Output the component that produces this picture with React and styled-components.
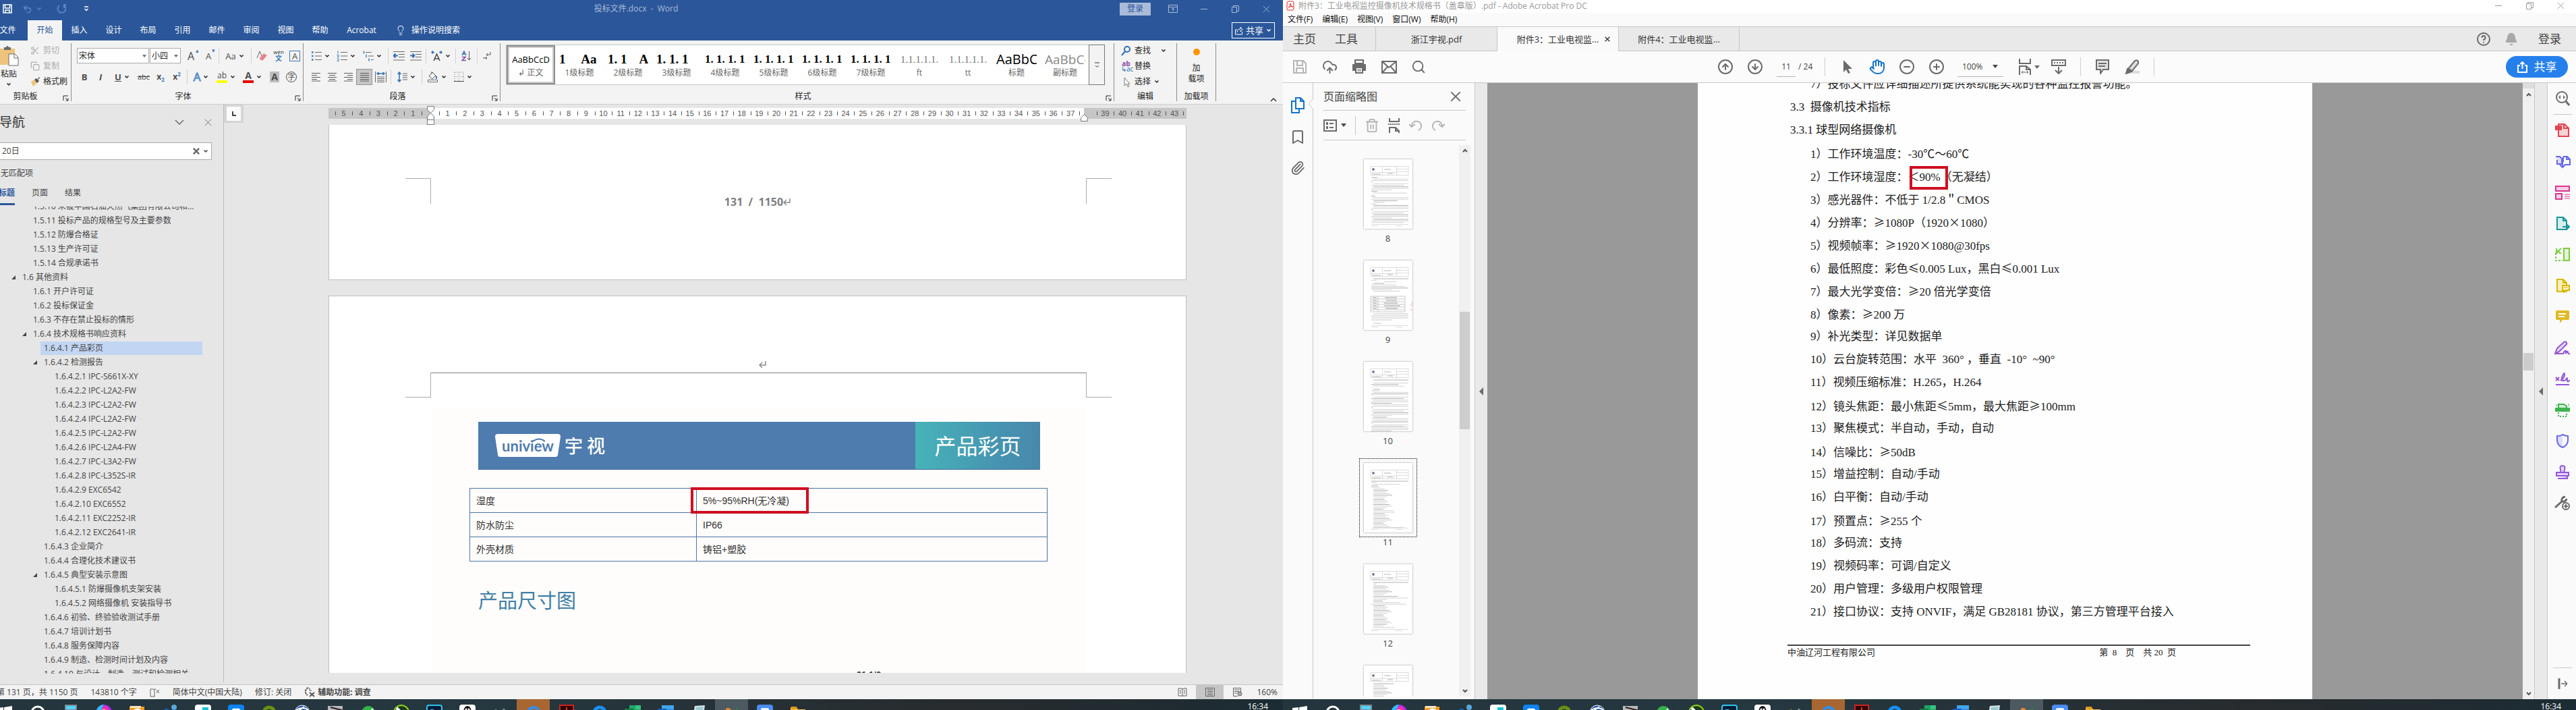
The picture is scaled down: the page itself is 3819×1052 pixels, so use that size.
import React from 'react';
import styled, { createGlobalStyle } from 'styled-components';
import {
  Bell,
  Bookmark,
  CircleArrowDown,
  CircleArrowUp,
  CircleMinus,
  CirclePlus,
  CloudUpload,
  Copy,
  Hand,
  Lightbulb,
  Paperclip,
  Scissors,
  Search,
  Trash2,
  Undo2,
} from 'lucide-react';

const ui = '"Open Sans", "Noto Sans CJK SC", sans-serif';
const cjk = '"Noto Sans CJK SC", sans-serif';

const menuTabs = ['插入', '设计', '布局', '引用', '邮件', '审阅', '视图', '帮助'];

const styleItems = [
  { label: '↲ 正文', text: 'AaBbCcD', kind: 'body', active: true },
  { label: '1级标题', text: '1     Aa', kind: 'serif' },
  { label: '2级标题', text: '1. 1    A', kind: 'serif' },
  { label: '3级标题', text: '1. 1. 1', kind: 'serif' },
  { label: '4级标题', text: '1. 1. 1. 1', kind: 'small' },
  { label: '5级标题', text: '1. 1. 1. 1', kind: 'small' },
  { label: '6级标题', text: '1. 1. 1. 1', kind: 'small' },
  { label: '7级标题', text: '1. 1. 1. 1', kind: 'small' },
  { label: 'ft', text: '1.1.1.1.1.', kind: 'thin' },
  { label: 'tt', text: '1.1.1.1.1.', kind: 'thin' },
  { label: '标题', text: 'AaBbC', kind: 'title' },
  { label: '副标题', text: 'AaBbCc', kind: 'subtitle' },
];

const outline = [
  [1, '1.5.10 未被中国石油天然气集团有限公司和...'],
  [1, '1.5.11 投标产品的规格型号及主要参数'],
  [1, '1.5.12 防爆合格证'],
  [1, '1.5.13 生产许可证'],
  [1, '1.5.14 合规承诺书'],
  [0, '1.6 其他资料', 'open'],
  [1, '1.6.1 开户许可证'],
  [1, '1.6.2 投标保证金'],
  [1, '1.6.3 不存在禁止投标的情形'],
  [1, '1.6.4 技术规格书响应资料', 'open'],
  [2, '1.6.4.1 产品彩页', 'active'],
  [2, '1.6.4.2 检测报告', 'open'],
  [3, '1.6.4.2.1 IPC-S661X-XY'],
  [3, '1.6.4.2.2 IPC-L2A2-FW'],
  [3, '1.6.4.2.3 IPC-L2A2-FW'],
  [3, '1.6.4.2.4 IPC-L2A2-FW'],
  [3, '1.6.4.2.5 IPC-L2A2-FW'],
  [3, '1.6.4.2.6 IPC-L2A4-FW'],
  [3, '1.6.4.2.7 IPC-L3A2-FW'],
  [3, '1.6.4.2.8 IPC-L352S-IR'],
  [3, '1.6.4.2.9 EXC6542'],
  [3, '1.6.4.2.10 EXC6552'],
  [3, '1.6.4.2.11 EXC2252-IR'],
  [3, '1.6.4.2.12 EXC2641-IR'],
  [2, '1.6.4.3 企业简介'],
  [2, '1.6.4.4 合理化技术建议书'],
  [2, '1.6.4.5 典型安装示意图', 'open'],
  [3, '1.6.4.5.1 防爆摄像机支架安装'],
  [3, '1.6.4.5.2 网络摄像机 安装指导书'],
  [2, '1.6.4.6 初验、终验验收测试手册'],
  [2, '1.6.4.7 培训计划书'],
  [2, '1.6.4.8 服务保障内容'],
  [2, '1.6.4.9 制造、检测时间计划及内容'],
  [2, '1.6.4.10 与设计、制造、测试和检测相关'],
];

const specItems = [
  '工作环境温度：-30℃～60℃',
  null,
  '感光器件：不低于 1/2.8＂CMOS',
  '分辨率：≥1080P（1920×1080）',
  '视频帧率：≥1920×1080@30fps',
  '最低照度：彩色≤0.005 Lux，黑白≤0.001 Lux',
  '最大光学变倍：≥20 倍光学变倍',
  '像素：≥200 万',
  '补光类型：详见数据单',
  '云台旋转范围：水平  360° ，垂直  -10°  ~90°',
  '视频压缩标准：H.265，H.264',
  '镜头焦距：最小焦距≤5mm，最大焦距≥100mm',
  '聚焦模式：半自动，手动，自动',
  '信噪比：≥50dB',
  '增益控制：自动/手动',
  '白平衡：自动/手动',
  '预置点：≥255 个',
  '多码流：支持',
  '视频码率：可调/自定义',
  '用户管理：多级用户权限管理',
  '接口协议：支持 ONVIF，满足 GB28181 协议，第三方管理平台接入',
];

/* indent and width of every text line in a thumbnail */
const full = [[14, 52], [11, 55], [11, 2], [14, 52], [11, 48], [14, 52], [11, 55], [11, 30]];
const list = [[14, 17], [14, 22], [14, 19], [14, 24], [14, 28], [14, 20], [14, 15]];
const thumbs = [
  { page: 8, lines: [[11, 9], ...full, [11, 9], [14, 50], [11, 2], [11, 6], [14, 52], [11, 55], [14, 36], [14, 17], [11, 8], [14, 52], ...full, [14, 52], [11, 55], [11, 48]] },
  { page: 9, table: true, lines: [[14, 52], [11, 8], [30, 18], [14, 16], [11, 38], [11, 50], [11, 55], [11, 30], [14, 40]] },
  { page: 10, lines: [[14, 52], [11, 2], [14, 52], [11, 40], [14, 46], [11, 2], [14, 10], [11, 12], ...full, ...full, [14, 20], [11, 55], ...full] },
  { page: 11, selected: true, lines: [[11, 55], [11, 8], [14, 39], [11, 10], [11, 13], ...list, ...list, [14, 30], [14, 32], ...list, [14, 19], [14, 24], [14, 46]] },
  { page: 12, lines: [[14, 52], [14, 5], ...list, [14, 36], [14, 52], [14, 20], [14, 14], [14, 40], [11, 52], ...list, ...list, [14, 32]] },
  { page: 13, lines: [[14, 30], [14, 16], ...list, ...list, ...list] },
];

/* ---------- icons ---------- */

const Svg = ({ w = 16, h = 16, box, children, ...rest }) => (
  <svg width={w} height={h} viewBox={box || `0 0 ${w} ${h}`} fill="none" stroke="currentColor" aria-hidden="true" {...rest}>
    {children}
  </svg>
);

const Chevron = () => (
  <Svg w={8} h={6} strokeWidth="1.5"><path d="M1.5 1.5 4 4l2.5-2.5" /></Svg>
);

const Caret = () => (
  <Svg w={8} h={5} stroke="none" fill="currentColor"><path d="M0 0h8L4 5z" /></Svg>
);

const Cross = ({ size = 12, width = 1 }) => (
  <Svg w={size} h={size} box="0 0 12 12" strokeWidth={width}><path d="M1 1l10 10M11 1 1 11" /></Svg>
);

const Launcher = () => (
  <Svg w={9} h={9}><path d="M1 8V1h7M4 4l4 4M8 4.5V8H4.5" /></Svg>
);

const ReturnIcon = () => (
  <Svg w={11} h={13} stroke="#8c8c8c" strokeWidth="1.5"><path d="M10 1v6H2M5 3 1 7l4 4" /></Svg>
);

const WindowIcons = ({ ribbon }) => (
  <>
    {ribbon && (
      <WindowButton aria-label="功能区显示选项">
        <Svg w={14} h={12}><path d="M.5.5h13v11H.5zM.5 3.5h13M7 10V5M5 7l2-2 2 2" /></Svg>
      </WindowButton>
    )}
    <WindowButton aria-label="最小化"><Svg w={11} h={11}><path d="M0 5.5h10" /></Svg></WindowButton>
    <WindowButton aria-label="还原"><Svg w={11} h={11}><path d="M.5 2.5h7v8h-7zM2.5 2.5v-2h8v8h-3" /></Svg></WindowButton>
    <WindowButton aria-label="关闭"><Cross size={11} /></WindowButton>
  </>
);

const BulletIcon = ({ mark }) => (
  <Svg w={16} h={16}>
    <path d="M6 2.5h10M6 8h10M6 13.5h10" stroke="#6a6a6a" />
    {mark === 'dot' && <path d="M1 2.5h2.5M1 8h2.5M1 13.5h2.5" stroke="#3d79b8" strokeWidth="2.5" />}
    {mark === 'num' && <path d="M2 .5v4M.5 6.5H3V8L1 9.5h2.5M.5 12H3v3.5H.5" stroke="#3d79b8" />}
  </Svg>
);

const MultiIcon = () => (
  <Svg w={16} h={16}>
    <path d="M4 2.5h9M8 8h8M12 13.5h4" stroke="#6a6a6a" />
    <path d="M1.5.5v4M5 6v4M9 11.5v4" stroke="#3d79b8" strokeWidth="1.5" />
  </Svg>
);

const AlignIcon = ({ type }) => {
  const spans = {
    left: ['1 14', '1 9'],
    center: ['1 14', '3 12'],
    right: ['1 14', '6 14'],
    justify: ['1 14', '1 14'],
  }[type];
  return (
    <Svg w={15} h={14}>
      {[1.5, 4.5, 7.5, 10.5, 13].map((y, i) => {
        const [a, b] = spans[i % 2].split(' ');
        return <path key={y} d={`M${a} ${y}H${b}`} stroke="#5c5c5c" />;
      })}
    </Svg>
  );
};

const IndentIcon = ({ flip }) => (
  <Svg w={17} h={14}>
    <path d="M0 .5h17M8 4.5h9M8 8.5h9M0 13h17" stroke="#6a6a6a" />
    <path d={flip ? 'M0 6.5h6M3.5 3.500l3 3-3 3' : 'M7 6.5H1M3.5 3.5l-3 3 3 3'} stroke="#2f6fb5" strokeWidth="2" />
  </Svg>
);

const PageCurlIcon = ({ color, fill, children }) => (
  <Svg w={22} h={22} stroke={color} strokeWidth="2">
    <path d="M3 2h9l5 5v13H3z" fill={fill} />
    <path d="M12 2v5h5" />
    {children}
  </Svg>
);

const railTools = [
  ['创建 PDF', <Svg w={22} h={22} stroke="#e4434f" strokeWidth="2"><path d="M5 2h9l6 6v12H5z" fill="#f7d3d6" /><path d="M13 2v6h7" /><rect x="1" y="5" width="8" height="5" fill="#e4434f" /></Svg>],
  ['合并文件', <Svg w={24} h={22} stroke="#6868e8" strokeWidth="2"><path d="M2 4h6l3 3v8H4V9" fill="#dcdcfa" /><path d="M13 4h6l4 4v8h-8M13 4v8M18 4v4h4" /><path d="M12 12v7M8 16l4 4 4-4" /></Svg>],
  ['组织页面', <Svg w={22} h={22} stroke="#d83790" strokeWidth="2"><path d="M1 2h20v7H1z" fill="#f5cfe2" /><path d="M1 13h9v8H1z" fill="#f5cfe2" /><path d="M14 14h8M14 17h8M14 20h8" strokeWidth="1" /></Svg>],
  ['导出 PDF', <PageCurlIcon color="#1b959a" fill="#d5eded"><path d="M11 16h9M17 12l4 4-4 4" /></PageCurlIcon>],
  ['编辑 PDF', <Svg w={22} h={22} stroke="#7fcb3f" strokeWidth="2"><path d="M13 2h8v18h-8z" fill="#e3f4d5" /><path d="M1 9v11h10M1 9h9" strokeDasharray="3 2" /><path d="M9 2 3 7M2 2v5h5" /></Svg>],
  ['注释页面', <PageCurlIcon color="#d9b800" fill="#f6eec0"><path d="M11 11h10v7h-5l-3 3v-3h-2z" fill="#fff6c8" /><path d="M13 14h6" strokeWidth="1" /></PageCurlIcon>],
  ['注释', <Svg w={22} h={22} stroke="none"><path d="M3 2h16q2 0 2 2v10q0 2-2 2h-8l-4 5v-5H3q-2 0-2-2V4q0-2 2-2z" fill="#dfba24" /><path d="M5 7h11M5 11h9" stroke="#fff" strokeWidth="2" /></Svg>],
  ['填写和签名', <Svg w={24} h={22} stroke="#9256d9" strokeWidth="2"><path d="M1 20 4 12 14 3q3-2 4 1 1 2-1 3L7 17z" fill="#e5d6f6" /><path d="M1 20h12q3-6 4-4t-1 4q4-5 4-2t3 2" /></Svg>],
  ['发送以供签名', <Svg w={22} h={22} stroke="#9256d9" strokeWidth="2"><path d="M1 9l5 5M6 9l-5 5M8 14q6-4 6-9t-3 2 1 7 5-3 1 2 4 0M1 20h20" /></Svg>],
  ['扫描', <Svg w={22} h={22} stroke="#3fb44f" strokeWidth="2"><path d="M5 9V3h8l4 3v3" fill="#d6f0da" /><path d="M1 9h20v4H1z" fill="#3fb44f" /><path d="M5 15v6h12v-6" strokeDasharray="2 2" /><path d="M2 3v3M20 2v4" strokeWidth="1" /></Svg>],
  ['保护', <Svg w={22} h={22} stroke="#6868e8" strokeWidth="2"><path d="M11 2v18Q3 17 3 10V4q5 0 8-2z" fill="#dcdcfa" stroke="none" /><path d="M11 2q4 2 8 2v6q0 8-8 11-8-3-8-11V4q5 0 8-2z" /></Svg>],
  ['图章', <Svg w={22} h={22} stroke="#9256d9" strokeWidth="2"><path d="M8 12q1-2 0-4-2-6 3-6t3 6q-1 2 0 4" fill="#e5d6f6" /><path d="M2 12h18v5H2zM4 21h14v-4" fill="#e5d6f6" /></Svg>],
  ['更多工具', <Svg w={24} h={22} stroke="#6b6b6b" strokeWidth="3"><path d="M1 18 11 9M11 9q-1-6 5-7M11 9q6 1 7-4" /><circle cx="17" cy="16" r="5" strokeWidth="2" /><path d="M17 13v6M14 16h6" strokeWidth="2" /></Svg>],
];

const taskIcons = [
  ['开始', <><path d="M1 5l9-1v8H1zM11 4l12-2v10H11z" fill="#fff" /></>],
  ['搜索', <circle cx="12" cy="12" r="9" fill="none" stroke="#fff" strokeWidth="3" />],
  ['计算器', <><path d="M3 0h18v24H3z" fill="#7b8a93" /><path d="M5 2h14v5H5z" fill="#52d3ff" /><path d="M5 10h3v2H5zM10 10h3v2h-3z" fill="#fff" /></>],
  ['画图', <><path d="M0 12a12 12 0 0 1 24 0z" fill="#a32cf0" /><path d="M4 12q2-10 12-10l6 10z" fill="#ff2aa5" /><path d="M1 9Q4 0 12 0L6 12z" fill="#25c3f5" /><circle cx="12" cy="12" r="5" fill="#fff" /></>],
  ['照片查看器', <><path d="M1 3h22v20H1z" fill="#f79a1b" /><path d="M2 2h16v3H2z" fill="#f3e6c8" /><circle cx="13" cy="13" r="6" fill="#f79a1b" stroke="#fff" strokeWidth="3" /></>],
  ['协作', <><circle cx="18" cy="4" r="4" fill="#5aa7dd" /><circle cx="7" cy="11" r="5" fill="#0b66c3" /></>],
  ['看图', <><rect width="24" height="24" rx="4" fill="#fff" /><path d="M11 4h9v14h-9z" fill="#18c3d5" /><path d="M4 9h10v10H4z" fill="#0c8fe0" /></>],
  ['网盘', <><rect width="24" height="24" rx="4" fill="#0b84f0" /><path d="M5 12q0-8 7-6 7-2 7 6z" fill="#fff" /></>],
  ['浏览器', <circle cx="12" cy="12" r="8" fill="none" stroke="#6b8f13" strokeWidth="5" />],
  ['网络', <><circle cx="12" cy="12" r="11" fill="#1f50a8" stroke="#fff" /><path d="M3 8q10-6 18 0M2 13q9-7 13-10" stroke="#fff" strokeWidth="2" fill="none" /></>],
  ['标注', <><path d="M1 2h22v20H1z" fill="#b9b9b9" /><path d="M5 4l16 4-14 4" stroke="#222" strokeWidth="2" fill="none" /></>],
  ['安全', <><circle cx="12" cy="12" r="10" fill="#36b24a" /><path d="M7 10l5 4 7-8" stroke="#fff" strokeWidth="2" fill="none" /></>],
  ['CorelDRAW', <><circle cx="12" cy="12" r="11" fill="#1b3a17" stroke="#8fd11c" strokeWidth="2" /><path d="M5 5l14 14" stroke="#fff" strokeWidth="4" /></>],
  ['Photoshop', <><rect x="1" y="1" width="22" height="22" rx="3" fill="#001e36" stroke="#2fc4f2" strokeWidth="2" /><path d="M7 16V8h3q4 2 0 4M14 10h4" stroke="#2fc4f2" strokeWidth="2" fill="none" /></>],
  ['QQ', <><rect width="24" height="24" rx="4" fill="#fff" /><path d="M6 14q0-12 6-12t6 12z" fill="#111" /><circle cx="10" cy="7" r="1.5" fill="#fff" /><circle cx="14" cy="7" r="1.5" fill="#fff" /></>],
  ['星标', <><path d="M5 6l1 3 3 1-3 1-1 3-1-3-3-1 3-1z" fill="#e3b341" /><path d="M17 5l1 2 2 1-2 1-1 2-1-2-2-1 2-1z" fill="#8a9aa3" /></>],
  ['搜索引擎', <circle cx="12" cy="12" r="8" fill="none" stroke="#2f8ff0" strokeWidth="4" />, '#a86632'],
  ['Acrobat', <><path d="M2 1h20v22H2z" fill="#2b0000" stroke="#d32020" strokeWidth="2" /><path d="M12 4v5l-3 6" stroke="#f33" strokeWidth="2" fill="none" /></>],
  ['会议', <circle cx="12" cy="12" r="8" fill="none" stroke="#1690f5" strokeWidth="5" />],
  ['Excel', <><path d="M7 1h17v22H7z" fill="#21a366" /><path d="M16 1h8v6h-8z" fill="#33c481" /><path d="M0 6h13v12H0z" fill="#107c41" /></>],
  ['Word', <><path d="M6 1h18v22H6z" fill="#2b7cd3" /><path d="M6 1h18v6H6z" fill="#41a5ee" /><path d="M0 6h13v12H0z" fill="#185abd" /></>],
  ['记事本', <><path d="M6 2l15-1-3 22-15-3z" fill="#d6e6ea" /><path d="M8 4l11-1-1 5-11 1z" fill="#9fc7d2" /></>],
  ['小工具', <><path d="M3 6q7-4 9 6H3z" fill="#e0862a" /><path d="M10 12q8-1 12-11-2 10-8 13z" fill="#1b9a3c" /></>, '#4c5960'],
  ['会议室', <><rect width="24" height="24" rx="4" fill="#4a8cf0" /><rect x="6" y="5" width="12" height="12" rx="2" fill="#e9f2ff" /></>],
  ['资源管理器', <><path d="M1 4h9l2 3h11v16H1z" fill="#f5c23c" /><path d="M2 3h8v4H2z" fill="#e19a1d" /></>],
];

/* ---------- shared ---------- */

const TaskBar = () => (
  <TaskRow>
    {taskIcons.map(([name, art, tint]) => (
      <TaskButton key={name} aria-label={name} $tint={tint}>
        <svg width="24" height="24" viewBox="0 0 24 24" aria-hidden="true">{art}</svg>
      </TaskButton>
    ))}
    <Clock>16:34</Clock>
  </TaskRow>
);

const wideSigns = /([≥≤×～℃＂＜])/;
const SpecText = ({ children }) => children.split(wideSigns).map((part, i) => (
  wideSigns.test(part) ? <Wide key={i}>{part}</Wide> : part
));

/* ---------- word window ---------- */

const Ribbon = () => (
  <RibbonBar>
    <Group $w={123}>
      <GroupBody>
        <PasteButton>
          <Svg w={30} h={30} stroke="none">
            <path d="M2 4h22v24H2z" fill="#eec47c" />
            <path d="M8 6V2h3q2-4 4 0h3v4z" fill="#6b6b6b" />
            <path d="M15 12h9l5 5v12H15z" fill="#fff" stroke="#6b6b6b" />
            <path d="M23 12v6h6" stroke="#6b6b6b" />
          </Svg>
          <span>粘贴</span>
          <Chevron />
        </PasteButton>
        <Stack>
          <RowButton disabled><Scissors size={14} strokeWidth={2} />剪切</RowButton>
          <RowButton disabled><Copy size={14} strokeWidth={2} />复制</RowButton>
          <RowButton>
            <Svg w={14} h={14} stroke="none"><path d="M1 7l5-3 4 5-6 5z" fill="#eec47c" /><path d="M6 4l3-2 4 4-3 3zM11 3l2-3 1 1-2 3z" fill="#555" /></Svg>
            格式刷
          </RowButton>
        </Stack>
      </GroupBody>
      <GroupLabel><span>剪贴板</span><Launcher /></GroupLabel>
    </Group>
    <Divider />
    <Group $w={343}>
      <GroupBody $pad={8}>
        <Stack>
          <ToolRow>
            <Combo $w={107}>
              <select aria-label="字体" defaultValue="宋体"><option>宋体</option></select><Caret />
            </Combo>
            <Combo $w={46}>
              <select aria-label="字号" defaultValue="小四"><option>小四</option></select><Caret />
            </Combo>
            <Tool $w={28} aria-label="增大字号"><Glyph $size={16}>A</Glyph><Mark>▴</Mark></Tool>
            <Tool $w={24} aria-label="减小字号"><Glyph $size={13}>A</Glyph><Mark>▾</Mark></Tool>
            <Bar />
            <Tool $w={42} aria-label="更改大小写"><Glyph>Aa</Glyph><Chevron /></Tool>
            <Bar />
            <Tool $w={26} aria-label="清除格式">
              <Svg w={16} h={16}><path d="M1 11 5 1l3 7" stroke="#666" /><path d="M5 11l6-7 5 3-6 7q-4 2-5-3z" fill="#e8838f" stroke="none" /></Svg>
            </Tool>
            <Tool $w={24} aria-label="拼音指南"><Pinyin><small>wén</small><b>文</b></Pinyin></Tool>
            <Tool $w={24} aria-label="字符边框"><Glyph $framed>A</Glyph></Tool>
          </ToolRow>
          <ToolRow>
            <Tool $w={22} aria-label="加粗"><Glyph $bold>B</Glyph></Tool>
            <Tool $w={26} aria-label="倾斜"><Glyph $bold $italic>I</Glyph></Tool>
            <Tool $w={38} aria-label="下划线"><Glyph $bold $line="underline">U</Glyph><Chevron /></Tool>
            <Tool $w={26} aria-label="删除线"><Glyph $size={11} $line="line-through">abc</Glyph></Tool>
            <Tool $w={24} aria-label="下标"><Glyph $bold $size={12}>x<sub>2</sub></Glyph></Tool>
            <Tool $w={24} aria-label="上标"><Glyph $bold $size={12}>x<sup>2</sup></Glyph></Tool>
            <Bar />
            <Tool $w={36} aria-label="文本效果"><Glyph $size={17} $outline>A</Glyph><Chevron /></Tool>
            <Tool $w={38} aria-label="突出显示"><Glyph $size={12} $under="#ffff00">ab</Glyph><Chevron /></Tool>
            <Tool $w={40} aria-label="字体颜色"><Glyph $size={14} $bold $under="#e60000">A</Glyph><Chevron /></Tool>
            <Tool $w={26} aria-label="字符底纹"><Glyph $bold $size={14} $shade>A</Glyph></Tool>
            <Tool $w={24} aria-label="带圈字符"><Glyph $size={11} $round>字</Glyph></Tool>
          </ToolRow>
        </Stack>
      </GroupBody>
      <GroupLabel><span>字体</span><Launcher /></GroupLabel>
    </Group>
    <Divider />
    <Group $w={291}>
      <GroupBody $pad={6}>
        <Stack>
          <ToolRow>
            <Tool $w={38} aria-label="项目符号"><BulletIcon mark="dot" /><Chevron /></Tool>
            <Tool $w={38} aria-label="编号"><BulletIcon mark="num" /><Chevron /></Tool>
            <Tool $w={40} aria-label="多级列表"><MultiIcon /><Chevron /></Tool>
            <Bar />
            <Tool $w={26} aria-label="减少缩进"><IndentIcon /></Tool>
            <Tool $w={24} aria-label="增加缩进"><IndentIcon flip /></Tool>
            <Bar />
            <Tool $w={38} aria-label="中文版式">
              <Svg w={17} h={16}><path d="M4 15 8.5 5 13 15M6 12h5" stroke="#444" strokeWidth="1.5" /><path d="M5 2.5H1M3 .5l-2 2 2 2M12 2.5h4M14 .5l2 2-2 2" stroke="#2f6fb5" strokeWidth="1.5" /></Svg>
              <Chevron />
            </Tool>
            <Bar />
            <Tool $w={26} aria-label="排序">
              <Svg w={15} h={16}><path d="M1 7 4 1l3 6M2 5h4" stroke="#2f6fb5" strokeWidth="1.5" /><path d="M1 9.5h5l-5 5h6" stroke="#8a4aa8" strokeWidth="1.5" /><path d="M11.5 1v13M9 11l2.5 3 2.5-3" stroke="#555" /></Svg>
            </Tool>
            <Bar />
            <Tool $w={24} aria-label="显示编辑标记">
              <Svg w={14} h={14} stroke="#555"><path d="M12 1v4H6M8 3 6 5l2 2M1 10h6M5 8l2 2-2 2" /></Svg>
            </Tool>
          </ToolRow>
          <ToolRow>
            <Tool $w={24} aria-label="左对齐"><AlignIcon type="left" /></Tool>
            <Tool $w={24} aria-label="居中"><AlignIcon type="center" /></Tool>
            <Tool $w={24} aria-label="右对齐"><AlignIcon type="right" /></Tool>
            <Tool $w={24} $on aria-label="两端对齐"><AlignIcon type="justify" /></Tool>
            <Tool $w={24} aria-label="分散对齐">
              <Svg w={17} h={16}><path d="M.5 0v16M16.5 0v16M3 8h11M3 10.5h11M3 13h11M3 15.5h11" stroke="#666" /><path d="M3 3h11M5.5 1 3 3l2.5 2M11.5 1 14 3l-2.5 2" stroke="#2f6fb5" strokeWidth="1.5" /></Svg>
            </Tool>
            <Bar />
            <Tool $w={40} aria-label="行距">
              <Svg w={15} h={16}><path d="M3 1v14M.5 4 3 1l2.5 3M.5 12 3 15l2.5-3" stroke="#2f6fb5" strokeWidth="1.5" /><path d="M8 3h7M8 6h7M8 9h7M8 12h7" stroke="#666" /></Svg>
              <Chevron />
            </Tool>
            <Bar />
            <Tool $w={38} aria-label="底纹">
              <Svg w={17} h={17}><path d="M3 8l5-6 5 5-5 5zM7 4V1" stroke="#555" /><path d="M13 7q3 3 1 5z" fill="#2f6fb5" stroke="#2f6fb5" /><path d="M1.5 13.5h14v3h-14z" stroke="#666" fill="#fff" /></Svg>
              <Chevron />
            </Tool>
            <Tool $w={40} aria-label="边框">
              <Svg w={15} h={15} stroke="#777"><path d="M1 1h13v13M1 1v13M7.5 1v13M1 7.5h13" strokeDasharray="1 2" /><path d="M0 14.5h15" stroke="#444" /></Svg>
              <Chevron />
            </Tool>
          </ToolRow>
        </Stack>
      </GroupBody>
      <GroupLabel><span>段落</span><Launcher /></GroupLabel>
    </Group>
    <Divider />
    <Group $w={909}>
      <GroupBody $pad={8}>
        <Gallery>
          {styleItems.map((item) => (
            <StyleItem key={item.label} $active={item.active}>
              <Preview $kind={item.kind}>{item.text}</Preview>
              <StyleName>{item.label}</StyleName>
            </StyleItem>
          ))}
          <GalleryMore aria-label="其他样式">
            <Svg w={9} h={9} stroke="#333"><path d="M1 1h7M2 5l2.5 2.5L7 5" /></Svg>
          </GalleryMore>
        </Gallery>
      </GroupBody>
      <GroupLabel><span>样式</span><Launcher /></GroupLabel>
    </Group>
    <Divider />
    <Group $w={92}>
      <GroupBody $pad={10}>
        <Stack>
          <RowButton>
            <Svg w={15} h={15} stroke="#2f6fb5" strokeWidth="2"><circle cx="9" cy="5" r="4" /><path d="M6 8l-5 6" /></Svg>
            查找<ChevronGap /><Chevron />
          </RowButton>
          <RowButton><Swap><b>ab</b><i>↳ac</i></Swap>替换</RowButton>
          <RowButton>
            <Svg w={15} h={15} stroke="#777"><path d="M5 1v12l3-3 2 5 2-1-2-4h3z" fill="#fff" /></Svg>
            选择<Chevron />
          </RowButton>
        </Stack>
      </GroupBody>
      <GroupLabel $plain><span>编辑</span></GroupLabel>
    </Group>
    <Divider />
    <Group $w={57}>
      <GroupBody>
        <AddinButton>
          <Svg w={10} h={12} stroke="none"><ellipse cx="5" cy="6" rx="5" ry="5" fill="#ff9500" /></Svg>
          <span>加</span>
          <span>载项</span>
        </AddinButton>
      </GroupBody>
      <GroupLabel $plain><span>加载项</span></GroupLabel>
    </Group>
    <Divider />
    <Collapse aria-label="折叠功能区"><Svg w={10} h={7} stroke="#333" strokeWidth="1.5"><path d="M1 6l4-4 4 4" /></Svg></Collapse>
  </RibbonBar>
);

const range = (a, b) => Array.from({ length: Math.abs(b - a) + 1 }, (_, i) => (a < b ? a + i : a - i));

const Ruler = () => (
  <RulerBar>
    <RulerPart $grow={151} $dim>
      <RulerGap $grow={38} />
      {range(5, 1).map((n) => <RulerCell key={n}>{n}</RulerCell>)}
      <RulerGap $grow={50} $tick />
    </RulerPart>
    <RulerPart $grow={970}>
      <IndentMarker $top={-3}>
        <Svg w={11} h={28} stroke="#777"><path d="M.5.5h10v5l-5 5-5-5zM5.5 10.5l5 5v5H.5v-5zM.5 20.5h10v7H.5z" fill="#fff" /></Svg>
      </IndentMarker>
      <RulerGap $grow={50} />
      {range(1, 37).map((n) => <RulerCell key={n}>{n}</RulerCell>)}
      <RulerGap $grow={28} $tick />
    </RulerPart>
    <RulerPart $grow={152} $dim>
      <IndentMarker $top={9}>
        <Svg w={11} h={11} stroke="#777"><path d="M5.5.5l5 5v5H.5v-5z" fill="#fff" /></Svg>
      </IndentMarker>
      <RulerGap $grow={72} />
      {range(39, 43).map((n) => <RulerCell key={n}>{n}</RulerCell>)}
      <RulerGap $grow={20} $tick />
    </RulerPart>
  </RulerBar>
);

const WordWindow = () => (
  <Word>
    <WordTitle>
      <QuickButton $w={18} $on aria-label="保存">
        <Svg w={14} h={14} stroke="#fff" strokeWidth="1.5"><path d="M1 1h12v12H1zM3.5 1v5h7V1M4 13V9h6v4" /></Svg>
      </QuickButton>
      <QuickButton $w={38} aria-label="撤消"><Undo2 size={15} strokeWidth={2.5} /><Chevron /></QuickButton>
      <QuickButton $w={34} aria-label="恢复">
        <Svg w={14} h={14} strokeWidth="2"><path d="M11 2a6 6 0 1 1-7 0M11 6V1h3" /></Svg>
      </QuickButton>
      <QuickButton $w={24} $on aria-label="自定义快速访问工具栏"><Svg w={8} h={9} stroke="#fff" strokeWidth="1.5"><path d="M1 1h6M1.5 4 4 6.5 6.5 4" /></Svg></QuickButton>
      <WordName>投标文件.docx  -  Word</WordName>
      <LoginButton>登录</LoginButton>
      <WindowIcons ribbon />
    </WordTitle>
    <WordTabs>
      <FileTab>文件</FileTab>
      <WordTab $active>开始</WordTab>
      {menuTabs.map((tab) => <WordTab key={tab}>{tab}</WordTab>)}
      <AcrobatTab>Acrobat</AcrobatTab>
      <TellMe><Lightbulb size={16} strokeWidth={1.5} />操作说明搜索</TellMe>
      <WordShare>
        <Svg w={12} h={13}><path d="M3 5H.5v7h10V8M3 9q0-5 5-5V1l3 4-3 3V6" /></Svg>
        共享<Chevron />
      </WordShare>
    </WordTabs>
    <Ribbon />
    <Workspace>
      <NavPane>
        <NavHead>
          <h2>导航</h2>
          <IconButton aria-label="任务窗格选项"><Svg w={14} h={8} strokeWidth="1.5"><path d="M1 1l6 6 6-6" /></Svg></IconButton>
          <IconButton aria-label="关闭导航"><Cross size={11} /></IconButton>
        </NavHead>
        <NavSearch>
          <input aria-label="搜索文档" defaultValue="20日" />
          <IconButton aria-label="清除"><Cross size={10} width={3} /></IconButton>
          <Chevron />
        </NavSearch>
        <NavHint>无匹配项</NavHint>
        <NavTabs>
          <NavTab $active>标题</NavTab>
          <NavTab>页面</NavTab>
          <NavTab>结果</NavTab>
        </NavTabs>
        <Tree>
          {outline.map(([level, text, state]) => (
            <TreeRow key={text} $level={level}>
              <TreeArrow>
                {state === 'open' && <Svg w={6} h={6} stroke="none" fill="#444"><path d="M6 0v6H0z" /></Svg>}
              </TreeArrow>
              <TreeLabel $active={state === 'active'}>{text}</TreeLabel>
            </TreeRow>
          ))}
        </Tree>
      </NavPane>
      <TabStop><button type="button" aria-label="制表符"><Svg w={8} h={8} strokeWidth="2"><path d="M2 0v6h5" /></Svg></button></TabStop>
      <Canvas>
        <Ruler />
        <PageEnd>
          <MarkRow $flip>
            <Corner $side="left" $edge="top" />
            <Corner $side="right" $edge="top" />
          </MarkRow>
          <PageNumber>131  /  1150<ReturnIcon /></PageNumber>
        </PageEnd>
        <PageStart>
          <HeaderMark><ReturnIcon /></HeaderMark>
          <MarkRow $rule>
            <Corner $side="left" $edge="bottom" />
            <Corner $side="right" $edge="bottom" />
          </MarkRow>
          <Brochure>
            <Banner>
              <Logo>
                <Svg w={97} h={34} stroke="none">
                  <path d="M4 0h89q4 0 4 4l-4 27q0 3-4 3H8q-4 0-4-3L0 4q0-4 4-4z" fill="#fff" />
                  <path d="M56 11q9-7 18 0" stroke="#4e7cae" strokeWidth="2" />
                </Svg>
                <LogoText>uniview</LogoText>
              </Logo>
              <BrandName>宇 视</BrandName>
              <BannerTag>产品彩页</BannerTag>
            </Banner>
            <SpecTable>
              <tbody>
                <tr><th scope="row">湿度</th><td>5%~95%RH(无冷凝)<RedBox $top={-2} $left={-9} $w={175} $h={39} /></td></tr>
                <tr><th scope="row">防水防尘</th><td>IP66</td></tr>
                <tr><th scope="row">外壳材质</th><td>铸铝+塑胶</td></tr>
              </tbody>
            </SpecTable>
            <SizeTitle>产品尺寸图</SizeTitle>
            <SizeNote>91.1/2</SizeNote>
          </Brochure>
        </PageStart>
      </Canvas>
    </Workspace>
    <StatusBar>
      <span>第 131 页，共 1150 页</span>
      <span>143810 个字</span>
      <Svg w={15} h={14} stroke="#666"><path d="M7 3v10H1V2h4l2 1V2h2M7 13l1-1M10 3l4 5M14 3l-4 5" /></Svg>
      <span>简体中文(中国大陆)</span>
      <span>修订: 关闭</span>
      <Access>
        <Svg w={16} h={15} stroke="#555"><path d="M6 1a6 6 0 0 0-1 11" strokeDasharray="3 1" strokeWidth="2" /><path d="M8 8l7 6M15 8l-7 6" strokeWidth="2" /><path d="M8 1v4h3" /></Svg>
        辅助功能: 调查
      </Access>
      <ViewSwitch>
        <ViewButton aria-label="阅读视图"><Svg w={14} h={13} stroke="#666"><path d="M7 1v12M1 1h4l2 1 2-1h4v11H1zM3 4h2M3 6h2M3 8h2M9 4h2M9 6h2M9 8h2" /></Svg></ViewButton>
        <ViewButton $on aria-label="页面视图"><Svg w={14} h={13} stroke="#666"><path d="M.5.5h13v12H.5zM3 3h8M3 5.5h8M3 8h8M3 10.5h8" /></Svg></ViewButton>
        <ViewButton aria-label="Web 版式视图"><Svg w={14} h={13} stroke="#666"><path d="M7 12.5H.5V.5h11V6M2 3h8M2 5.5h7M2 8h4" /><circle cx="10" cy="9" r="3" fill="#aaa" /></Svg></ViewButton>
        <span>160%</span>
      </ViewSwitch>
    </StatusBar>
    <TaskBar />
  </Word>
);

/* ---------- acrobat window ---------- */

const Thumbnail = ({ page, lines, table, selected }) => (
  <ThumbItem $selected={selected}>
    <ThumbSheet>
      <svg width="72" height="103" viewBox="0 0 72 103" aria-hidden="true">
        <path d="M10 10.5h56v13H10zM27.5 10v13M48.5 10v13M48 14.5h18M48 18.5h18M10 19.5h38" fill="none" stroke="#dcdcdc" />
        <circle cx="14" cy="15" r="2" fill="#7a7f96" />
        <path d="M30 15h10M35 21h8M12 22h13" stroke="#b5b5b5" />
        {lines.map(([x, w], i) => (
          <path key={i} d={`M${x} ${27 + i * 2.3}h${w}`} stroke={i % 3 ? '#d2d2d2' : '#b0b0b0'} />
        ))}
        {table && (
          <>
            <path d="M10 53h51v23H10zM21 53v23M10 57h51M10 61h51M10 65h51M10 69h51M10 73h51" fill="none" stroke="#c9c9c9" />
            <path d="M13 55h6M31 55h18M13 59h6M33 59h16M13 63h6M30 63h20M13 67h6M30 67h24M13 71h6M32 71h18" stroke="#999" />
            <path d="M70 62l2 1M69 66h3M69 72l3 2" stroke="#f3a0a0" />
            <path d="M14 79h52M11 82h55M11 85h55M11 88h30M14 93h12" stroke="#c4c4c4" />
          </>
        )}
        <path d="M11 98.5h10M47 98.5h10M11 96.5h55" stroke="#ddd" />
      </svg>
    </ThumbSheet>
    <ThumbLabel>{page}</ThumbLabel>
  </ThumbItem>
);

const AcrobatWindow = () => (
  <Acrobat>
    <PdfTitle>
      <Svg w={12} h={15} stroke="#e5252a"><rect x="1" y="1" width="10" height="13" rx="2" /><path d="M3 10q3-1 3-6 1 5 4 5-4-1-7 1z" /></Svg>
      <h1>附件3：工业电视监控摄像机技术规格书（盖章版）.pdf - Adobe Acrobat Pro DC</h1>
      <WindowIcons />
    </PdfTitle>
    <PdfMenu>
      {['文件(F)', '编辑(E)', '视图(V)', '窗口(W)', '帮助(H)'].map((m) => <button type="button" key={m}>{m}</button>)}
    </PdfMenu>
    <PdfTabs>
      <PdfHome><button type="button">主页</button><button type="button">工具</button></PdfHome>
      <PdfTab>浙江宇视.pdf</PdfTab>
      <PdfTab $active>附件3：工业电视监...<Cross size={8} width={2} /></PdfTab>
      <PdfTab>附件4：工业电视监...</PdfTab>
      <PdfAccount>
        <Svg w={22} h={22} strokeWidth="2" stroke="#6b6b6b"><circle cx="11" cy="11" r="9" /><path d="M8.5 9q0-3 2.5-3t2.5 2.5T11 12v1M11 15v1.5" /></Svg>
        <Bell size={20} fill="#a8a8a8" color="#a8a8a8" />
        <button type="button">登录</button>
      </PdfAccount>
    </PdfTabs>
    <PdfTools>
      <ToolSet>
        <PdfTool aria-label="保存"><Svg w={20} h={20} stroke="#b5b5b5" strokeWidth="2"><path d="M1 1h14l4 4v14H1zM6 1v7h8V1M5 19v-7h10v7" /></Svg></PdfTool>
        <PdfTool aria-label="上传"><CloudUpload size={23} /></PdfTool>
        <PdfTool aria-label="打印"><Svg w={22} h={22} stroke="none"><path d="M5 1h12v5H5z" stroke="#6b6b6b" strokeWidth="2" /><path d="M1 7h20v10H1z" fill="#6b6b6b" /><path d="M6 12h10v8H6z" fill="#fff" stroke="#6b6b6b" strokeWidth="2" /><path d="M8 15h6M8 17h6" stroke="#6b6b6b" /></Svg></PdfTool>
        <PdfTool aria-label="邮件"><Svg w={23} h={19} strokeWidth="2"><path d="M1 1h21v17H1zM1 1l10 9L22 1M1 18l8-9M22 18l-8-9" /></Svg></PdfTool>
        <PdfTool aria-label="查找"><Search size={22} /></PdfTool>
      </ToolSet>
      <ToolSet $middle>
        <PdfTool aria-label="上一页"><CircleArrowUp size={24} /></PdfTool>
        <PdfTool aria-label="下一页"><CircleArrowDown size={24} /></PdfTool>
        <PageInput aria-label="页码" defaultValue="11" />
        <PageTotal>/ 24</PageTotal>
        <PdfRule />
        <PdfTool aria-label="选择"><Svg w={14} h={20} stroke="none"><path d="M1 0v18l4-4 3 6 3-1-3-6h6z" fill="#6b6b6b" /></Svg></PdfTool>
        <PdfTool $blue aria-label="抓手"><Hand size={24} /></PdfTool>
        <PdfTool aria-label="缩小"><CircleMinus size={24} /></PdfTool>
        <PdfTool aria-label="放大"><CirclePlus size={24} /></PdfTool>
        <ZoomBox><select aria-label="缩放" defaultValue="100%"><option>100%</option></select><Caret /></ZoomBox>
        <PdfTool aria-label="适合宽度">
          <Svg w={18} h={24} strokeWidth="2"><path d="M1 0v7h16V0M1 24V11h10l6 5v8M11 11v5h6" /><path d="M4 20h10M6 18l-2 2 2 2M12 18l2 2-2 2" strokeWidth="1" /></Svg>
          <Caret />
        </PdfTool>
        <PdfTool aria-label="滚动"><Svg w={22} h={22} strokeWidth="2"><path d="M1 1h20v8H1zM11 11v10M6 16l5 5 5-5" /><path d="M4 5h14" strokeDasharray="2 2" /></Svg></PdfTool>
        <PdfRule $tight />
        <PdfTool aria-label="添加附注"><Svg w={20} h={22} strokeWidth="2"><path d="M1 1h18v14h-8l-4 6v-6H1z" fill="#e2e2e2" /><path d="M4 6h12M4 10h10" /></Svg></PdfTool>
        <PdfTool aria-label="突出显示"><Svg w={22} h={22} strokeWidth="2"><path d="M9 17h13v4H5z" fill="#dcdcdc" stroke="none" /><path d="M5 14 15 2q3-2 5 1v3l-9 11z" fill="#dcdcdc" /><path d="M4 14l6 4-8 3z" fill="#6b6b6b" /></Svg></PdfTool>
        <PdfRule $tight />
      </ToolSet>
      <PdfShare>
        <Svg w={15} h={17} stroke="#fff" strokeWidth="2"><path d="M4 6H1v10h13V6h-3M7.5 11V1M4.5 4l3-3 3 3" /></Svg>
        共享
      </PdfShare>
    </PdfTools>
    <PdfBody>
      <SideRail>
        <IconButton $blue aria-label="页面缩略图"><Svg w={20} h={24} strokeWidth="2"><path d="M7 1h7l5 5v11H7zM14 1v5h5M7 6H1v17h11v-6" /></Svg></IconButton>
        <IconButton aria-label="书签"><Bookmark size={24} /></IconButton>
        <IconButton aria-label="附件"><Paperclip size={22} /></IconButton>
        <Notch><Svg w={8} h={16} stroke="#c8c8c8"><path d="M8 0 1 8l7 8" fill="#fafafa" /></Svg></Notch>
      </SideRail>
      <ThumbPanel>
        <PanelHead>
          <h2>页面缩略图</h2>
          <IconButton aria-label="关闭面板"><Cross size={16} width={1.5} /></IconButton>
        </PanelHead>
        <PanelTools>
          <IconButton aria-label="选项">
            <Svg w={20} h={20} strokeWidth="2"><path d="M1 2h18v16H1z" /><path d="M4 7h3M4 13h3" strokeWidth="4" /><path d="M9 7h6M9 13h6" /></Svg>
          </IconButton>
          <Caret />
          <PanelRule />
          <IconButton $pale aria-label="删除"><Trash2 size={22} /></IconButton>
          <IconButton aria-label="拆分"><Svg w={18} h={22} strokeWidth="2"><path d="M2 0v5h14V0M2 22v-8h9l5 5v3M11 14v5h5" /><path d="M0 9h18" strokeDasharray="2 1" /></Svg></IconButton>
          <IconButton $pale aria-label="逆时针旋转"><Svg w={20} h={20} strokeWidth="2"><path d="M4 11a7 7 0 1 1 10 6M0 8l4 4 5-4" /></Svg></IconButton>
          <IconButton $pale aria-label="顺时针旋转"><Svg w={20} h={20} strokeWidth="2"><path d="M16 11a7 7 0 1 0-10 6M20 8l-4 4-5-4" /></Svg></IconButton>
        </PanelTools>
        <ThumbScroll>
          <ThumbList>{thumbs.map((t) => <Thumbnail key={t.page} {...t} />)}</ThumbList>
          <Scrollbar>
            <Svg w={8} h={6} strokeWidth="2"><path d="M1 5l3-3 3 3" /></Svg>
            <ScrollTrack $grow={228} />
            <ScrollThumb $h={174} />
            <ScrollTrack $grow={373} />
            <Svg w={8} h={6} strokeWidth="2"><path d="M1 1l3 3 3-3" /></Svg>
          </Scrollbar>
        </ThumbScroll>
      </ThumbPanel>
      <Splitter aria-label="折叠缩略图"><Svg w={6} h={12} stroke="none" fill="#6b6b6b"><path d="M6 0v12L0 6z" /></Svg></Splitter>
      <PdfCanvas>
        <Sheet>
          <SpecLine $item>7）投标文件应详细描述所提供系统能实现的各种监控报警功能。</SpecLine>
          <SpecLine>3.3  摄像机技术指标</SpecLine>
          <SpecLine>3.3.1 球型网络摄像机</SpecLine>
          {specItems.map((text, i) => (
            <SpecLine key={i} $item>
              {i + 1}）
              {text ? <SpecText>{text}</SpecText> : (
                <>工作环境湿度：<Boxed><SpecText>＜90%</SpecText><RedBox $top={-7} $left={2} $w={57} $h={35} /></Boxed>（无凝结）</>
              )}
            </SpecLine>
          ))}
          <SheetFoot><span>中油辽河工程有限公司</span><span>第  8    页    共 20  页</span></SheetFoot>
        </Sheet>
      </PdfCanvas>
      <Scrollbar $split>
        <Svg w={8} h={6} strokeWidth="2"><path d="M1 5l3-3 3 3" /></Svg>
        <ScrollTrack $grow={378} />
        <ScrollThumb $h={26} />
        <ScrollTrack $grow={474} />
        <Svg w={8} h={6} strokeWidth="2"><path d="M1 1l3 3 3-3" /></Svg>
      </Scrollbar>
      <Splitter aria-label="折叠工具"><Svg w={6} h={12} stroke="none" fill="#6b6b6b"><path d="M6 0v12L0 6z" /></Svg></Splitter>
      <ToolRail>
        <RailButton aria-label="搜索工具"><Svg w={22} h={22} stroke="#6b6b6b" strokeWidth="2"><circle cx="10" cy="9" r="8" /><path d="M16 15l5 6" strokeWidth="3" /><path d="M8 6 5 9l3 3zM12 6l3 3-3 3z" fill="#6b6b6b" stroke="none" /></Svg></RailButton>
        <RailRule />
        {railTools.map(([name, art]) => <RailButton key={name} aria-label={name}>{art}</RailButton>)}
        <RailSpace />
        <RailRule />
        <RailButton aria-label="收起"><Svg w={14} h={16} stroke="#6b6b6b" strokeWidth="1.5"><path d="M2 0v16" strokeWidth="3" /><path d="M5 8h8M10 4l4 4-4 4" /></Svg></RailButton>
      </ToolRail>
    </PdfBody>
    <TaskBar />
  </Acrobat>
);

const App = () => (
  <>
    <GlobalStyle />
    <Desktop>
      <WordWindow />
      <AcrobatWindow />
    </Desktop>
  </>
);

export default App;

const GlobalStyle = createGlobalStyle`
  *, *::before, *::after { box-sizing: border-box; }
  body { margin: 0; font-family: ${ui}; font-size: 12px; line-height: 16px; color: #444; }
  button, input, select { font: inherit; color: inherit; border: 0; padding: 0; margin: 0; background: none; border-radius: 0; }
  select { appearance: none; }
  h1, h2, ul, p { margin: 0; padding: 0; font-weight: 400; list-style: none; }
  svg { flex: none; display: block; }
`;

const Desktop = styled.div`
  display: flex;
  height: 100vh;
  overflow: hidden;
`;

const Window = styled.section`
  display: flex;
  flex-direction: column;
  min-width: 0;
  overflow: hidden;
`;

/* the left monitor starts a little outside the viewport */
const Word = styled(Window)`
  flex: 1920 1 0;
  margin-left: -18px;
  background: #e6e6e6;
`;

const WordTitle = styled.header`
  display: flex;
  flex: none;
  height: 30px;
  padding: 0 2px 4px 20px;
  align-items: center;
  background: #2b579a;
  color: #a9bbd9;
`;

const QuickButton = styled.button`
  display: flex;
  align-items: center;
  justify-content: center;
  gap: 6px;
  width: ${(p) => p.$w}px;
  margin-right: 8px;
  color: ${(p) => (p.$on ? '#ffffff' : '#5f84be')};
`;

const WordName = styled.span`
  flex: 1;
  text-align: center;
  white-space: pre;
  padding-left: 78px;
`;

const LoginButton = styled.button`
  width: 46px;
  height: 19px;
  margin-right: 10px;
  border-radius: 1px;
  background: #a9bbd9;
  color: #2b579a;
`;

const WindowButton = styled.button`
  display: flex;
  width: 46px;
  height: 20px;
  align-items: center;
  justify-content: center;
`;

const WordTabs = styled.nav`
  display: flex;
  flex: none;
  height: 30px;
  background: #2b579a;
  color: #fff;
`;

const WordTab = styled.button`
  width: 51px;
  background: ${(p) => (p.$active ? '#f3f3f3' : 'transparent')};
  color: ${(p) => (p.$active ? '#2b579a' : '#ffffff')};
`;

const FileTab = styled(WordTab)`
  width: 59px;
`;

const AcrobatTab = styled(WordTab)`
  width: 72px;
`;

const TellMe = styled.button`
  display: flex;
  align-items: center;
  gap: 8px;
  margin-left: 14px;
`;

const WordShare = styled.button`
  display: flex;
  align-items: center;
  justify-content: center;
  gap: 4px;
  width: 64px;
  height: 24px;
  margin: 3px 12px 3px auto;
  border: 1px solid #fff;
  font-size: 13px;
`;

const RibbonBar = styled.div`
  display: flex;
  flex: none;
  height: 95px;
  background: #f3f3f3;
  border-bottom: 1px solid #cfcfcf;
  color: #262626;
`;

const Divider = styled.div`
  width: 1px;
  margin: 4px 0;
  background: #8f8f8f;
`;

const Group = styled.div`
  display: flex;
  flex-direction: column;
  flex: none;
  width: ${(p) => p.$w}px;
`;

const GroupBody = styled.div`
  display: flex;
  height: 76px;
  align-items: center;
  padding-left: ${(p) => p.$pad || 0}px;
`;

const GroupLabel = styled.div`
  display: flex;
  height: 14px;
  align-items: center;
  padding-right: ${(p) => (p.$plain ? 0 : 3)}px;

  span {
    flex: 1;
    text-align: center;
  }

  svg {
    margin-top: 4px;
  }
`;

const Stack = styled.div`
  display: flex;
  flex-direction: column;
`;

const ToolRow = styled.div`
  display: flex;
  height: 31px;
  align-items: center;
`;

const Tool = styled.button`
  display: flex;
  position: relative;
  align-items: center;
  justify-content: center;
  gap: 4px;
  width: ${(p) => p.$w}px;
  height: 24px;
  ${(p) => p.$on && 'background: #c6c6c6; border: 1px solid #969696;'}
`;

const Bar = styled.span`
  width: 6px;
  height: 22px;
  background: linear-gradient(#d0d0d0, #d0d0d0) center / 1px 100% no-repeat;
`;

const Glyph = styled.span`
  font-size: ${(p) => p.$size || 13}px;
  line-height: 16px;
  color: #4c4c4c;
  font-weight: ${(p) => (p.$bold ? 700 : 400)};
  font-style: ${(p) => (p.$italic ? 'italic' : 'normal')};
  text-decoration: ${(p) => p.$line || 'none'};
  ${(p) => p.$under && `border-bottom: 4px solid ${p.$under}; line-height: 14px; width: 16px; text-align: center;`}
  ${(p) => p.$shade && 'background: #bdbdbd; width: 14px;'}
  ${(p) => p.$framed && 'border: 1px solid #3d79b8; width: 16px; line-height: 14px;'}
  ${(p) => p.$round && 'border: 1px solid #555; border-radius: 50%; width: 16px; line-height: 14px;'}
  ${(p) => p.$outline && 'color: #fff; -webkit-text-stroke: 1px #4a86c5;'}

  sub, sup {
    font-size: 8px;
    line-height: 0;
    color: #3d79b8;
  }
`;

const Mark = styled.span`
  position: absolute;
  top: -2px;
  right: 2px;
  font-size: 9px;
  line-height: 12px;
  color: #3d79b8;
`;

const Pinyin = styled.span`
  display: flex;
  flex-direction: column;
  align-items: center;

  small {
    font-size: 8px;
    line-height: 8px;
  }

  b {
    font-size: 10px;
    line-height: 11px;
    color: #3d79b8;
  }
`;

const Combo = styled.span`
  display: flex;
  align-items: center;
  width: ${(p) => p.$w}px;
  height: 23px;
  margin-right: 1px;
  padding: 0 3px 0 2px;
  border: 1px solid #ababab;
  background: #fff;

  select {
    flex: 1;
    min-width: 0;
  }

  svg {
    width: 6px;
    height: 4px;
    color: #666;
  }
`;

const PasteButton = styled.button`
  display: flex;
  flex-direction: column;
  align-items: center;
  gap: 4px;
  width: 38px;
  margin: 0 13px 0 12px;
`;

const RowButton = styled.button`
  display: flex;
  align-items: center;
  gap: 5px;
  height: 23px;
  white-space: nowrap;

  &:disabled {
    color: #adadad;
  }
`;

const ChevronGap = styled.span`
  width: 5px;
`;

const Swap = styled.span`
  display: flex;
  flex-direction: column;
  width: 15px;
  font-size: 10px;
  line-height: 8px;

  b {
    color: #8a4aa8;
  }

  i {
    font-style: normal;
    color: #2f6fb5;
  }
`;

const Gallery = styled.div`
  display: flex;
  height: 60px;
  margin-bottom: 4px;
  border: 1px solid #c6c6c6;
  background: #fff;
`;

const StyleItem = styled.button`
  display: flex;
  flex-direction: column;
  align-items: center;
  width: 72px;
  padding: ${(p) => (p.$active ? '6px 2px' : '8px 6px')};
  overflow: hidden;
  ${(p) => p.$active && 'border: 2px solid #8c8c8c; box-shadow: inset 0 0 0 2px #cdcdcd;'}
`;

const previewStyles = {
  body: 'font-size: 13px; color: #000;',
  serif: 'font-family: "Liberation Serif", serif; font-size: 19px; font-weight: 700; color: #000; align-self: flex-start;',
  small: 'font-family: "Liberation Serif", serif; font-size: 17px; font-weight: 700; color: #000; align-self: flex-start;',
  thin: 'font-family: "Liberation Serif", serif; font-size: 15px; color: #777;',
  title: 'font-size: 20px; color: #000; align-self: flex-start;',
  subtitle: 'font-size: 19px; color: #888; align-self: flex-start;',
};

const Preview = styled.span`
  max-width: 100%;
  height: 26px;
  overflow: hidden;
  line-height: 26px;
  white-space: pre;
  ${(p) => previewStyles[p.$kind]}
`;

const StyleName = styled.span`
  color: #666;
  line-height: 18px;
`;

const GalleryMore = styled.button`
  display: flex;
  align-items: center;
  justify-content: center;
  width: 24px;
  margin: -1px;
  border: 1px solid #777;
  background: #f3f3f3;
`;

const AddinButton = styled.button`
  display: flex;
  flex-direction: column;
  align-items: center;
  width: 57px;

  svg {
    margin-bottom: 10px;
  }
`;

const Collapse = styled.button`
  margin: auto 9px 3px auto;
`;

const Workspace = styled.div`
  display: flex;
  flex: 1;
  min-height: 0;
`;

const NavPane = styled.aside`
  display: flex;
  flex-direction: column;
  flex: none;
  width: 350px;
  margin-bottom: 3px;
  padding-bottom: 13px;
  border-right: 1px solid #bdbdbd;
`;

const IconButton = styled.button`
  display: flex;
  align-items: center;
  justify-content: center;
  color: ${(p) => (p.$blue ? '#1473c8' : p.$pale ? '#b3b3b3' : '#6b6b6b')};
`;

const NavHead = styled.div`
  display: flex;
  align-items: center;
  gap: 30px;
  height: 56px;
  padding: 0 17px 4px 17px;

  h2 {
    flex: 1;
    font-size: 19px;
    line-height: 24px;
    color: #333;
  }
`;

const NavSearch = styled.div`
  display: flex;
  align-items: center;
  gap: 5px;
  height: 26px;
  margin: 0 17px 0 10px;
  padding: 0 4px 0 10px;
  border: 1px solid #ababab;
  background: #fff;

  input {
    flex: 1;
    min-width: 0;
    outline: none;
  }
`;

const NavHint = styled.p`
  height: 36px;
  padding: 12px 0 0 19px;
`;

const NavTabs = styled.div`
  display: flex;
  gap: 25px;
  height: 31px;
  padding-left: 16px;
`;

const NavTab = styled.button`
  border-bottom: 3px solid ${(p) => (p.$active ? '#2b579a' : 'transparent')};
  color: ${(p) => (p.$active ? '#2b579a' : '#444')};
  font-weight: ${(p) => (p.$active ? 700 : 400)};
  padding-bottom: 3px;
`;

const Tree = styled.ul`
  flex: 1;
  min-height: 0;
  margin-top: 2px;
  overflow: hidden;

  li:first-child {
    margin-top: -11px;
  }
`;

const TreeRow = styled.li`
  display: flex;
  align-items: center;
  height: 21px;
  padding: 0 31px 0 ${(p) => 35 + p.$level * 16}px;
`;

const TreeArrow = styled.span`
  width: 11px;
`;

const TreeLabel = styled.button`
  flex: 1;
  height: 20px;
  padding-left: 5px;
  text-align: left;
  white-space: nowrap;
  background: ${(p) => (p.$active ? '#c2d5f2' : 'transparent')};
`;

const TabStop = styled.div`
  flex: none;
  width: 29px;
  height: 27px;
  padding: 3px 4px;
  background: #d5d5d5;

  button {
    display: flex;
    align-items: center;
    justify-content: center;
    width: 21px;
    height: 21px;
    background: #fbfbfb;
  }
`;

const Canvas = styled.main`
  display: flex;
  flex-direction: column;
  flex: 1;
  min-width: 0;
  padding: 5px 143px 17px 126px;
`;

const RulerBar = styled.div`
  display: flex;
  flex: none;
  height: 16px;
  font: 11px/16px "Liberation Sans", Arial, sans-serif;
  color: #555;
`;

const RulerPart = styled.div`
  display: flex;
  position: relative;
  min-width: 0;
  flex: ${(p) => p.$grow} 1 0;
  background: ${(p) => (p.$dim ? '#c6c6c6' : '#ffffff')};
`;

const tick = 'linear-gradient(#555, #555) left center / 1px 6px no-repeat';

const RulerCell = styled.span`
  flex: 100 1 0;
  min-width: 0;
  text-align: center;
  background: ${tick};
`;

const RulerGap = styled.span`
  flex: ${(p) => p.$grow} 1 0;
  ${(p) => p.$tick && `background: ${tick};`}
`;

const IndentMarker = styled.span`
  position: absolute;
  left: -5px;
  top: ${(p) => p.$top}px;
  z-index: 1;
`;

const PageEnd = styled.article`
  flex: none;
  height: 230px;
  margin-top: 9px;
  padding-top: 79px;
  border: 1px solid #c0c0c0;
  border-top: 0;
  background: #fff;
`;

const PageStart = styled.article`
  display: flex;
  flex-direction: column;
  flex: 1;
  min-height: 0;
  overflow: hidden;
  margin-top: 23px;
  border: 1px solid #c0c0c0;
  border-bottom: 0;
  background: #fff;
`;

const MarkRow = styled.div`
  display: flex;
  justify-content: space-between;
  flex: none;
  height: ${(p) => (p.$flip ? 38 : 37)}px;
  margin: 0 110px 0 113px;
  ${(p) => p.$rule && 'background: linear-gradient(#7f7f7f, #7f7f7f) center top / calc(100% - 74px) 1px no-repeat;'}
`;

const Corner = styled.span`
  width: 38px;
  border: 0 solid #ababab;
  border-${(p) => (p.$side === 'left' ? 'right' : 'left')}-width: 1px;
  border-${(p) => p.$edge}-width: 1px;
`;

const PageNumber = styled.p`
  display: flex;
  align-items: center;
  justify-content: center;
  margin-top: -14px;
  font-size: 16px;
  line-height: 22px;
  font-weight: 700;
  white-space: pre;
  color: #7f7f7f;
`;

const HeaderMark = styled.p`
  display: flex;
  flex: none;
  justify-content: center;
  height: 113px;
  padding: 95px 0 0 14px;
`;

const Brochure = styled.div`
  display: flex;
  flex-direction: column;
  flex: 1;
  min-height: 0;
  margin: 16px 149px 0 152px;
  padding: 20px 56px 0;
  background: #fefdfb;
`;

const Banner = styled.div`
  display: flex;
  flex: none;
  align-items: center;
  height: 71px;
  margin: 0 11px 27px 13px;
  background: #4e7cae;
  border-bottom: 1px solid #416c9c;
  color: #fff;
`;

const Logo = styled.div`
  display: flex;
  position: relative;
  align-items: center;
  margin: 0 6px 0 25px;
`;

const LogoText = styled.span`
  position: absolute;
  inset: 0;
  text-align: center;
  font: 700 22px/36px Lato, sans-serif;
  color: #4e7cae;
`;

const BrandName = styled.span`
  flex: 1;
  font: 500 27px/36px ${cjk};
`;

const BannerTag = styled.span`
  align-self: stretch;
  width: 185px;
  text-align: center;
  font: 32px/68px ${cjk};
  background: linear-gradient(90deg, #47b3b8, #4690b0 75%, #4889ab);
`;

const SpecTable = styled.table`
  flex: none;
  border-collapse: collapse;
  font: 14px/20px "Liberation Sans", ${cjk};
  color: #333;

  th, td {
    position: relative;
    height: 36px;
    padding: 1px 9px 0;
    border: 1px solid #4f74a8;
    text-align: left;
    font-weight: 400;
    white-space: nowrap;
  }

  th {
    width: 336px;
  }
`;

const RedBox = styled.span`
  position: absolute;
  top: ${(p) => p.$top}px;
  left: ${(p) => p.$left}px;
  width: ${(p) => p.$w}px;
  height: ${(p) => p.$h}px;
  border: 4px solid #ce1021;
`;

const SizeTitle = styled.h2`
  flex: none;
  margin: 36px 0 0 13px;
  font: 29px/40px ${cjk};
  color: #3f80a5;
`;

const SizeNote = styled.p`
  flex: none;
  margin: 84px 0 0 574px;
  font: 700 13px/16px "Liberation Sans", sans-serif;
  color: #333;
`;

const StatusBar = styled.footer`
  display: flex;
  flex: none;
  align-items: center;
  gap: 19px;
  height: 22px;
  padding: 0 8px 0 13px;
  border-top: 1px solid #c6c6c6;
  background: #f3f3f3;
  white-space: nowrap;
`;

const Access = styled.span`
  display: flex;
  gap: 4px;
  align-items: center;
  font-weight: 700;
`;

const ViewSwitch = styled.div`
  display: flex;
  align-items: center;
  margin-left: auto;

  span {
    margin-left: 8px;
  }
`;

const ViewButton = styled.button`
  display: flex;
  align-items: center;
  justify-content: center;
  width: 41px;
  height: 21px;
  background: ${(p) => (p.$on ? '#c6c6c6' : 'transparent')};
`;

const TaskRow = styled.div`
  display: flex;
  flex: none;
  height: 16px;
  overflow: hidden;
  background: linear-gradient(90deg, #24353d, #25373f 40%, #272b2d 75%, #1c2c34);
`;

const TaskButton = styled.button`
  display: flex;
  flex: none;
  justify-content: center;
  align-items: flex-start;
  width: 49px;
  height: 36px;
  padding-top: 8px;
  background: ${(p) => p.$tint || 'transparent'};
`;

const Clock = styled.span`
  margin: 3px 22px 0 auto;
  color: #fff;
`;

const Acrobat = styled(Window)`
  flex: 1917 1 0;
  background: #fafafa;
`;

const PdfTitle = styled.header`
  display: flex;
  flex: none;
  align-items: center;
  height: 19px;
  padding: 0 0 2px 5px;
  background: #fff;
  color: #999;

  h1 {
    flex: 1;
    margin-left: 6px;
    font-size: 12px;
    line-height: 16px;
  }
`;

const PdfMenu = styled.nav`
  display: flex;
  flex: none;
  gap: 14px;
  height: 20px;
  padding-left: 7px;
  color: #111;
`;

const PdfTabs = styled.nav`
  display: flex;
  flex: none;
  height: 37px;
  border-top: 1px solid #c8c8c8;
  background: linear-gradient(#c8c8c8, #c8c8c8) bottom / 100% 1px no-repeat #e9e9e9;
`;

const PdfHome = styled.div`
  display: flex;
  width: 137px;
  padding-left: 15px;
  gap: 28px;
  font-size: 17px;
`;

const PdfTab = styled.button`
  display: flex;
  width: 180px;
  align-items: center;
  justify-content: center;
  gap: 9px;
  border-left: 1px solid #c8c8c8;
  font-size: 13px;
  color: #333;
  background: ${(p) => (p.$active ? '#fafafa' : 'transparent')};
  ${(p) => p.$active && 'padding-left: 17px;'}

  &:nth-child(4) {
    border-right: 1px solid #c8c8c8;
  }
`;

const PdfAccount = styled.div`
  display: flex;
  align-items: center;
  gap: 20px;
  margin-left: auto;
  padding-right: 22px;

  button {
    margin-left: 10px;
    font-size: 17px;
  }
`;

const PdfTools = styled.div`
  display: grid;
  grid-template-columns: 1fr auto 1fr;
  align-items: center;
  flex: none;
  height: 47px;
  padding: 0 12px 0 3px;
  border-bottom: 1px solid #c8c8c8;
  background: #fbfbfb;
`;

const ToolSet = styled.div`
  display: flex;
  align-items: center;
  ${(p) => p.$middle && 'margin-left: 28px;'}
`;

const PdfTool = styled.button`
  display: flex;
  align-items: center;
  justify-content: center;
  gap: 5px;
  width: 44px;
  height: 32px;
  color: ${(p) => (p.$blue ? '#1473c8' : '#6b6b6b')};
`;

const PageInput = styled.input`
  width: 28px;
  height: 30px;
  margin-left: 10px;
  text-align: center;
  border-bottom: 1px solid #b5b5b5;
`;

const PageTotal = styled.span`
  width: 39px;
  padding-left: 4px;
`;

const PdfRule = styled.span`
  width: 1px;
  height: 28px;
  background: #cfcfcf;
  margin: 0 ${(p) => (p.$tight ? 10 : 11)}px 0 ${(p) => (p.$tight ? 10 : 4)}px;
`;

const ZoomBox = styled.span`
  display: flex;
  align-items: center;
  width: 68px;
  height: 30px;
  margin: 0 16px 0 9px;
  padding: 0 8px 0 7px;
  border-bottom: 1px solid #b5b5b5;

  select {
    flex: 1;
    min-width: 0;
  }
`;

const PdfShare = styled.button`
  display: flex;
  justify-self: end;
  align-items: center;
  justify-content: center;
  gap: 10px;
  width: 92px;
  height: 32px;
  border-radius: 16px;
  background: #2680eb;
  color: #fff;
  font-size: 17px;
`;

const PdfBody = styled.div`
  display: flex;
  flex: 1;
  min-height: 0;
`;

const SideRail = styled.aside`
  display: flex;
  position: relative;
  flex-direction: column;
  align-items: center;
  gap: 23px;
  width: 45px;
  padding-top: 21px;
  border-right: 1px solid #c8c8c8;
`;

const Notch = styled.span`
  position: absolute;
  right: -1px;
  top: 23px;
`;

const ThumbPanel = styled.aside`
  display: flex;
  flex-direction: column;
  width: 239px;
  padding-bottom: 4px;
`;

const PanelHead = styled.div`
  display: flex;
  align-items: center;
  height: 41px;
  margin: 0 13px 0 15px;
  padding-right: 7px;
  border-bottom: 1px solid #c8c8c8;

  h2 {
    flex: 1;
    font-size: 16px;
    line-height: 22px;
  }
`;

const PanelTools = styled.div`
  display: flex;
  align-items: center;
  gap: 13px;
  height: 44px;
  margin: 0 13px 0 15px;
  border-bottom: 1px solid #c8c8c8;

  > svg {
    margin-left: -7px;
  }
`;

const PanelRule = styled.span`
  width: 1px;
  height: 28px;
  background: #c8c8c8;
`;

const ThumbScroll = styled.div`
  display: flex;
  flex: 1;
  min-height: 0;
  padding: 7px 6px 0 0;
`;

const ThumbList = styled.ul`
  flex: 1;
  padding: 15px 0 0 5px;
  overflow: hidden;
`;

const ThumbItem = styled.li`
  display: flex;
  flex-direction: column;
  align-items: center;
  width: 86px;
  height: 150px;
  margin: 0 auto;

  > span:first-child {
    outline: ${(p) => (p.$selected ? '1px dotted #000' : 'none')};
  }
`;

const ThumbSheet = styled.span`
  padding: 6px;

  svg {
    background: #fff;
    box-shadow: 0 0 2px #888;
  }
`;

const ThumbLabel = styled.span`
  font-size: 13px;
  line-height: 16px;
`;

const Scrollbar = styled.div`
  display: flex;
  flex-direction: column;
  align-items: center;
  flex: none;
  width: 17px;
  padding: ${(p) => (p.$split ? 6 : 5)}px 0 5px;
  border-top: ${(p) => (p.$split ? '8px solid #dedede' : '0')};
  background: #f0f0f0;
  color: #555;
`;

const ScrollTrack = styled.span`
  flex: ${(p) => p.$grow} 1 0;
`;

const ScrollThumb = styled.span`
  flex: none;
  width: 15px;
  height: ${(p) => p.$h}px;
  background: #cdcdcd;
`;

const Splitter = styled.button`
  display: flex;
  flex: none;
  align-items: center;
  justify-content: center;
  width: 19px;
  border-left: 1px solid #c8c8c8;
  background: #e9e9e9;
`;

const PdfCanvas = styled.main`
  flex: 1;
  min-width: 0;
  padding: 0 312px;
  overflow: hidden;
  background: #999;
`;

const Sheet = styled.article`
  height: 100%;
  padding: 0 92px 0 133px;
  overflow: hidden;
  background: #fefefe;
  font: 17px/34px "Liberation Serif", ${cjk};
  color: #222;
`;

const SpecLine = styled.p`
  height: 34px;
  padding-left: ${(p) => (p.$item ? 34 : 4)}px;
  white-space: pre-wrap;

  &:first-child {
    margin-top: -15px;
  }
`;

const Wide = styled.span`
  font-family: ${cjk};
`;

const Boxed = styled.span`
  position: relative;
`;

const SheetFoot = styled.footer`
  display: flex;
  justify-content: space-between;
  margin-top: 31px;
  padding-right: 110px;
  border-top: 2px solid #444;
  font-size: 13px;
  line-height: 20px;
  white-space: pre;
`;

const ToolRail = styled.aside`
  display: flex;
  flex-direction: column;
  align-items: center;
  flex: none;
  width: 43px;
  padding-left: 2px;
  border-left: 1px solid #c8c8c8;
`;

const RailButton = styled.button`
  display: flex;
  flex: none;
  align-items: center;
  justify-content: center;
  width: 40px;
  height: 46px;
`;

const RailRule = styled.span`
  flex: none;
  width: 28px;
  height: 1px;
  background: #c8c8c8;
`;

const RailSpace = styled.span`
  flex: 1;
`;
